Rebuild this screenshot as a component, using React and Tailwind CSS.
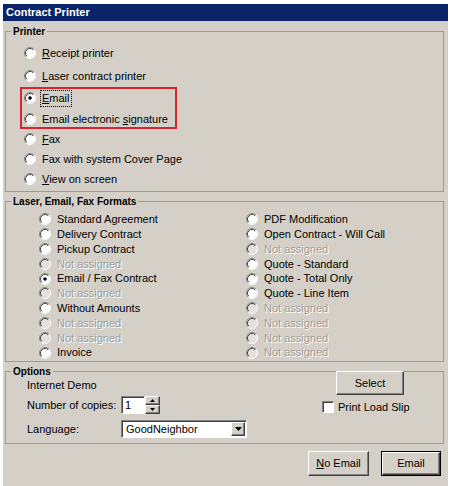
import React from 'react';

const printerOptions = [
  { label: 'Receipt printer', key: 0, mt: 'mt-0' },
  { label: 'Laser contract printer', key: 0, mt: 'mt-[7px]' },
];

const printerRest = [
  { label: 'Fax', key: 0, mt: 'mt-[4px]' },
  { label: 'Fax with system Cover Page', key: 24, mt: 'mt-[4px]' },
  { label: 'View on screen', key: 0, mt: 'mt-[4px]' },
];

const leftFormats = [
  { label: 'Standard Agreement' },
  { label: 'Delivery Contract' },
  { label: 'Pickup Contract' },
  { label: 'Not assigned', disabled: true },
  { label: 'Email / Fax Contract', checked: true },
  { label: 'Not assigned', disabled: true },
  { label: 'Without Amounts' },
  { label: 'Not assigned', disabled: true },
  { label: 'Not assigned', disabled: true },
  { label: 'Invoice' },
];

const rightFormats = [
  { label: 'PDF Modification' },
  { label: 'Open Contract - Will Call' },
  { label: 'Not assigned', disabled: true },
  { label: 'Quote - Standard' },
  { label: 'Quote - Total Only' },
  { label: 'Quote - Line Item' },
  { label: 'Not assigned', disabled: true },
  { label: 'Not assigned', disabled: true },
  { label: 'Not assigned', disabled: true },
  { label: 'Not assigned', disabled: true },
];

function Radio({ checked, disabled }) {
  return (
    <svg width="12" height="12" viewBox="0 0 12 12" className="shrink-0">
      <circle cx="6" cy="6" r="5" fill={disabled ? '#e4e1dc' : '#ffffff'} />
      <path d="M2.11 9.89 A5.5 5.5 0 0 1 9.89 2.11" fill="none" stroke="#8a8784" strokeWidth="1" />
      <path d="M9.89 2.11 A5.5 5.5 0 0 1 2.11 9.89" fill="none" stroke="#ffffff" strokeWidth="1" />
      <path d="M2.82 9.18 A4.5 4.5 0 0 1 9.18 2.82" fill="none" stroke="#4a4846" strokeWidth="1" />
      {checked && <circle cx="6" cy="6" r="1.8" fill="#000" />}
    </svg>
  );
}

// underline one letter at index u
function Label({ text, u }) {
  if (u === undefined || u < 0) return <span>{text}</span>;
  return (
    <span>
      {text.slice(0, u)}
      <span className="underline underline-offset-[1px]">{text[u]}</span>
      {text.slice(u + 1)}
    </span>
  );
}

function RadioRow({ label, u, checked, disabled, className = '', focused }) {
  return (
    <div className={`flex h-[16px] items-center gap-[6px] ${className}`}>
      <Radio checked={checked} disabled={disabled} />
      <span
        className={`${disabled ? 'text-[#a19e9a] [text-shadow:1px_1px_0_#ffffff]' : ''} ${
          focused ? 'outline-1 outline-dotted outline-black outline-offset-[1px]' : ''
        } leading-[13px]`}
      >
        <Label text={label} u={u} />
      </span>
    </div>
  );
}

function FormatRow({ label, checked, disabled }) {
  return (
    <div className="flex h-[14.8px] items-center gap-[6px]">
      <Radio checked={checked} disabled={disabled} />
      <span className={disabled ? 'text-[#a19e9a] [text-shadow:1px_1px_0_#ffffff]' : ''}>{label}</span>
    </div>
  );
}

const raised =
  'border border-t-white border-l-white border-r-[#404040] border-b-[#404040] shadow-[inset_-1px_-1px_0_#808080] bg-[#d4d0c8]';
const sunken =
  'border border-t-[#808080] border-l-[#808080] border-r-white border-b-white shadow-[inset_1px_1px_0_#404040] bg-white';

function Arrow({ up }) {
  return (
    <svg width="5" height="3" viewBox="0 0 5 3">
      <path d={up ? 'M0 3 L2.5 0 L5 3 Z' : 'M0 0 L5 0 L2.5 3 Z'} fill="#000" />
    </svg>
  );
}

export default function App() {
  return (
    <div className="h-[486px] w-[450px] bg-white pl-[3px] pt-[4px] font-['Liberation_Sans',Arial,sans-serif] text-[11px] text-black">
      <div className="flex h-[482px] w-[445px] flex-col bg-[#d4d0c8]">
        <div className="flex h-[17px] items-center bg-[#0a246a] pl-[3px] text-[11px] font-bold text-white">
          Contract Printer
        </div>

        {/* Printer */}
        <fieldset className="ml-[2px] mt-[4px] w-[439px] border border-[#9c9a96] pb-[4px] pl-[18px] pt-[7px]">
          <legend className="-ml-[13px] px-[2px] text-[10px] font-bold leading-[13px]">Printer</legend>
          {printerOptions.map((o) => (
            <RadioRow key={o.label} label={o.label} u={o.key} className={o.mt} />
          ))}
          <div className="relative mt-[6px]">
            <RadioRow label="Email" u={0} checked focused />
            <RadioRow label="Email electronic signature" u={17} className="mt-[5px]" />
            <div className="absolute -left-[4px] -top-[3px] h-[42px] w-[157px] border-2 border-[#d9232e]" />
          </div>
          {printerRest.map((o) => (
            <RadioRow key={o.label} label={o.label} u={o.key} className={o.mt} />
          ))}
        </fieldset>

        {/* Laser, Email, Fax Formats */}
        <fieldset className="ml-[2px] mt-[3px] w-[439px] border border-[#9c9a96] pb-[1px] pl-[33px] pt-[4px]">
          <legend className="-ml-[28px] px-[2px] text-[10px] font-bold leading-[13px]">
            Laser, Email, Fax Formats
          </legend>
          <div className="grid grid-cols-[207px_1fr]">
            <div className="flex flex-col">
              {leftFormats.map((f, i) => (
                <FormatRow key={i} {...f} />
              ))}
            </div>
            <div className="flex flex-col">
              {rightFormats.map((f, i) => (
                <FormatRow key={i} {...f} />
              ))}
            </div>
          </div>
        </fieldset>

        {/* Options */}
        <fieldset className="ml-[2px] mt-[3px] h-[79px] w-[439px] border border-[#9c9a96]">
          <legend className="ml-[5px] px-[2px] text-[10px] font-bold leading-[13px]">Options</legend>
          <div className="flex">
            <div className="flex w-[316px] flex-col pl-[21px]">
              <div className="flex h-[14px] items-center">Internet Demo</div>
              <div className="mt-[4px] flex h-[18px] items-center">
                <span className="w-[94px]">Number of copies:</span>
                <div className={`flex h-[18px] w-[24px] items-center pl-[3px] ${sunken}`}>1</div>
                <div className="flex h-[18px] w-[15px] flex-col">
                  <div className={`flex h-[9px] items-center justify-center ${raised}`}>
                    <Arrow up />
                  </div>
                  <div className={`flex h-[9px] items-center justify-center ${raised}`}>
                    <Arrow />
                  </div>
                </div>
              </div>
              <div className="mt-[6px] flex h-[18px] items-center">
                <span className="w-[94px]">Language:</span>
                <div className={`flex h-[18px] w-[126px] items-center justify-between pl-[4px] pr-[1px] ${sunken}`}>
                  <span>GoodNeighbor</span>
                  <div className={`flex h-[14px] w-[14px] items-center justify-center ${raised}`}>
                    <svg width="7" height="4" viewBox="0 0 7 4">
                      <path d="M0 0 L7 0 L3.5 4 Z" fill="#000" />
                    </svg>
                  </div>
                </div>
              </div>
            </div>
            <div className="-mt-[7px] flex flex-col">
              <button className={`ml-[14px] flex h-[24px] w-[68px] items-center justify-center ${raised}`}>
                Select
              </button>
              <div className="mt-[6px] flex h-[12px] items-center gap-[4px]">
                <div className={`h-[12px] w-[12px] ${sunken}`} />
                <span>Print Load Slip</span>
              </div>
            </div>
          </div>
        </fieldset>

        <div className="mt-[7px] flex justify-end gap-[12px] pr-[7px]">
          <button className={`flex h-[25px] w-[61px] items-center justify-center ${raised}`}>
            <Label text="No Email" u={0} />
          </button>
          <div className="h-[25px] w-[60px] border border-black">
            <button className={`flex h-full w-full items-center justify-center ${raised}`}>Email</button>
          </div>
        </div>
      </div>
    </div>
  );
}
